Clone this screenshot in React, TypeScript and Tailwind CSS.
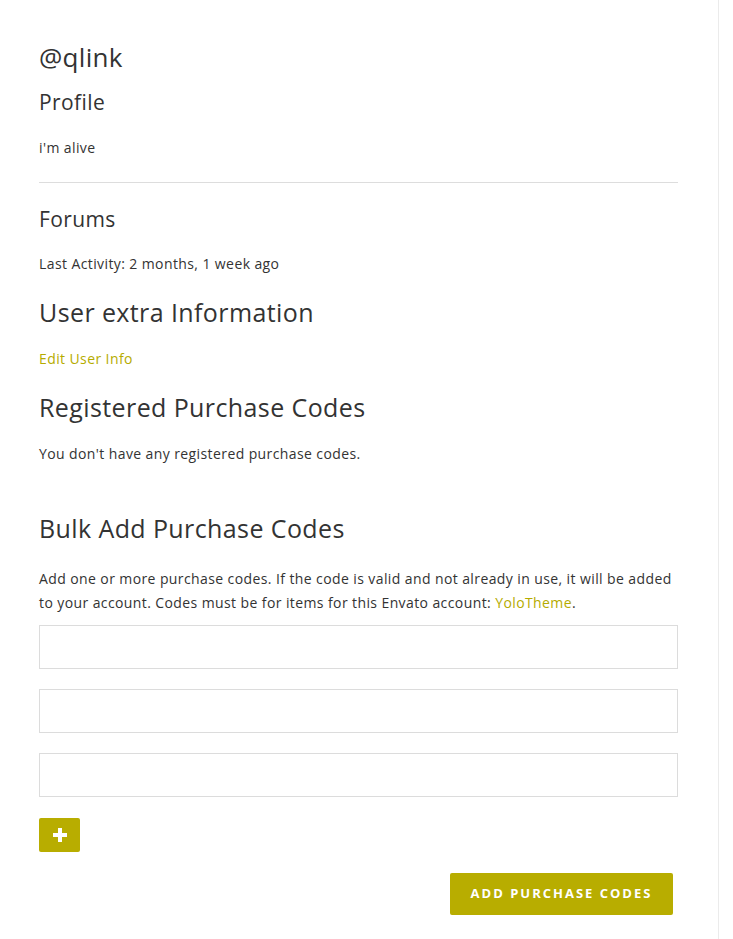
import React from 'react';

const font = { fontFamily: '"Open Sans", "Liberation Sans", sans-serif' };

const CodeInput = () => (
  <input
    type="text"
    className="block w-full h-[44px] border border-[#dcdcdc] bg-white px-3 text-sm outline-none"
  />
);

export default function App() {
  return (
    <div className="min-h-[939px] bg-white" style={font}>
      <div className="w-[719px] min-h-[939px] border-r border-[#ebebeb] pl-[39px] pr-[40px] pt-[40px] text-[#333]">
        <h1 className="text-[26px] leading-[34px] font-normal tracking-[0.3px]">@qlink</h1>

        <h2 className="mt-[15px] text-[21px] leading-[26px] font-normal tracking-[0.4px]">Profile</h2>
        <p className="mt-[23px] text-[14px] leading-[20px] tracking-[0.4px]">i'm alive</p>

        <hr className="mt-[24px] border-t border-[#dddddd]" />

        <h2 className="mt-[23px] text-[21px] leading-[26px] font-normal tracking-[0.4px]">Forums</h2>
        <p className="mt-[22px] text-[14px] leading-[20px] tracking-[0.4px]">Last Activity: 2 months, 1 week ago</p>

        <h2 className="mt-[22px] text-[25px] leading-[32px] font-normal tracking-[0.4px]">User extra Information</h2>
        <a href="#" className="mt-[21px] block text-[14px] leading-[20px] tracking-[0.4px] text-[#b5ab00]">
          Edit User Info
        </a>

        <h2 className="mt-[22px] text-[25px] leading-[32px] font-normal tracking-[0.4px]">Registered Purchase Codes</h2>
        <p className="mt-[21px] text-[14px] leading-[20px] tracking-[0.4px]">You don't have any registered purchase codes.</p>

        <h2 className="mt-[48px] text-[25px] leading-[32px] font-normal tracking-[0.4px]">Bulk Add Purchase Codes</h2>
        <p className="mt-[23px] text-[14px] leading-[24px] tracking-[0.4px]">
          Add one or more purchase codes. If the code is valid and not already in use, it will be added
          to your account. Codes must be for items for this Envato account:{' '}
          <a href="#" className="text-[#b5ab00]">YoloTheme</a>.
        </p>

        <div className="mt-[10px] flex flex-col gap-[20px]">
          <CodeInput />
          <CodeInput />
          <CodeInput />
        </div>

        <button className="mt-[21px] flex h-[34px] w-[41px] items-center justify-center rounded-[2px] bg-[#b8ad00]">
          <svg width="14" height="14" viewBox="0 0 14 14">
            <path d="M5 0h4v5h5v4H9v5H5V9H0V5h5z" fill="#fff" />
          </svg>
        </button>

        <div className="mt-[21px] flex justify-end pr-[5px]">
          <button className="h-[42px] w-[223px] rounded-[2px] bg-[#b8ad00] text-[13px] font-bold tracking-[2px] text-white">
            ADD PURCHASE CODES
          </button>
        </div>
      </div>
    </div>
  );
}
